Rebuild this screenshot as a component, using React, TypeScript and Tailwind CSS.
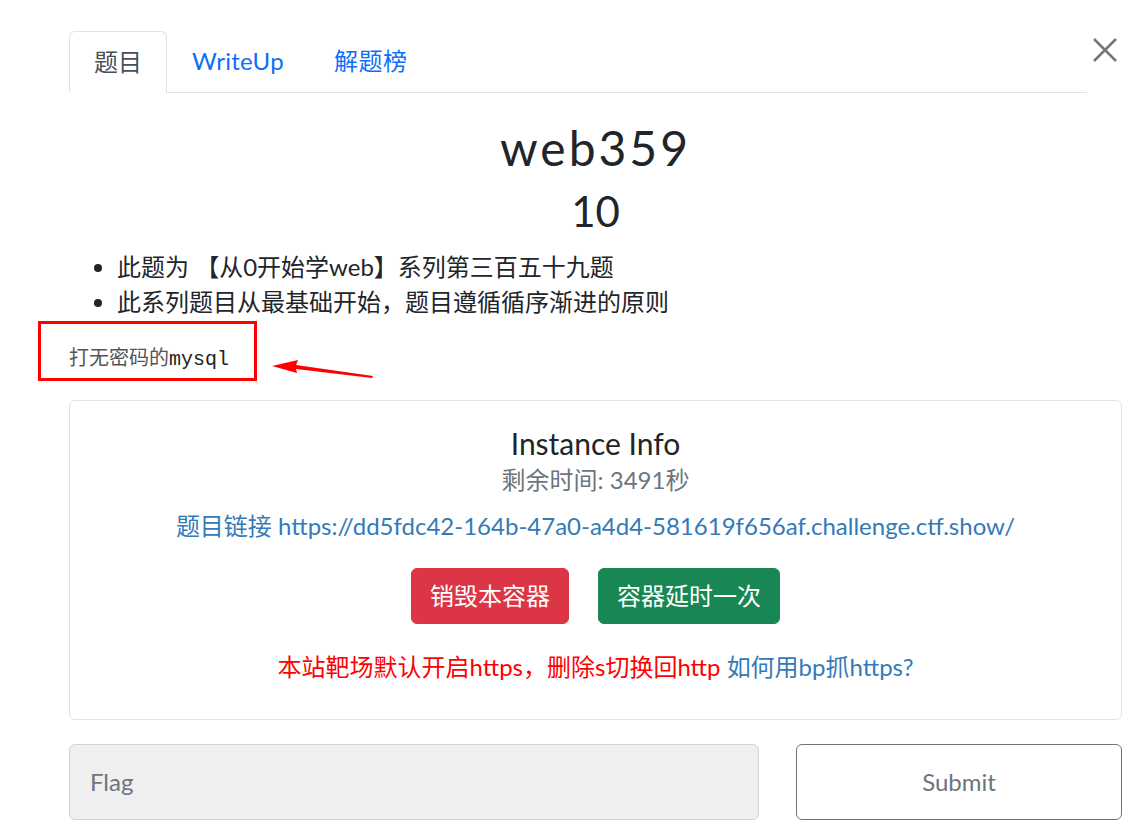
import React from "react";

export default function App() {
  const font = { fontFamily: 'Lato, "Noto Sans CJK SC", sans-serif' };
  return (
    <div className="relative min-h-[836px] w-[1139px] bg-white text-[24px] leading-[36px] text-[#212529]" style={font}>
      <div className="ml-[69px] w-[1053px] pt-[31px]">
        {/* tabs row */}
        <div className="flex items-start">
          <div className="flex flex-1 border-b border-[#dee2e6]">
            <div className="-mb-px rounded-t-[6px] border border-[#dee2e6] border-b-white bg-white px-[24px] py-[12px] text-[#495057]">题目</div>
            <div className="px-[25px] py-[12px] tracking-[0.3px] text-[#0d6efd]">WriteUp</div>
            <div className="px-[25px] py-[12px] tracking-[0.5px] text-[#0d6efd]">解题榜</div>
          </div>
          <div className="flex w-[35px] justify-center pt-[6px]">
            <svg width="26" height="26" viewBox="0 0 26 26">
              <path d="M2 2 L24 24 M24 2 L2 24" stroke="#777" strokeWidth="2.6" fill="none" />
            </svg>
          </div>
        </div>

        {/* title */}
        <h2 className="mt-[26px] text-center text-[48px] font-normal leading-[57px] tracking-[3px]">web359</h2>
        <h3 className="mb-[13px] mt-[10px] text-center text-[42px] font-normal leading-[50px]">10</h3>

        <ul className="mb-[29px] list-disc pl-[48px] leading-[35px]">
          <li>此题为 【从0开始学web】系列第三百五十九题</li>
          <li>此系列题目从最基础开始，题目遵循循序渐进的原则</li>
        </ul>

        <p className="relative text-[20px] leading-[24px] text-[#555]" style={{ fontFamily: '"Liberation Mono", "Noto Sans CJK SC", monospace' }}>
          打无密码的<span className="text-[#222]">mysql</span>
        </p>

        {/* card */}
        <div className="mt-[28px] rounded-[6px] border border-[#dfe2e6] px-[24px] pb-[34px] pt-[24px] text-center">
          <h5 className="text-[30px] font-normal leading-[36px]">Instance Info</h5>
          <div className="mt-[1px] text-[#6c757d]">剩余时间: 3491秒</div>
          <div className="mt-[10px] text-[#337ab7]">题目链接 https://dd5fdc42-164b-47a0-a4d4-581619f656af.challenge.ctf.show/</div>
          <div className="mt-[24px] flex justify-center gap-[29px]">
            <button className="rounded-[6px] border border-[#dc3545] bg-[#dc3545] px-[18px] py-[9px] leading-[36px] text-white">销毁本容器</button>
            <button className="rounded-[6px] border border-[#198754] bg-[#198754] px-[18px] py-[9px] leading-[36px] text-white">容器延时一次</button>
          </div>
          <div className="mt-[25px]">
            <span className="text-[#ff0000]">本站靶场默认开启https，删除s切换回http</span>{" "}
            <span className="text-[#337ab7]">如何用bp抓https?</span>
          </div>
        </div>

        {/* flag row */}
        <div className="mt-[24px] flex gap-[37px]">
          <div className="flex h-[76px] w-[690px] items-center rounded-[6px] border border-[#ced4da] bg-[#efefef] px-[20px] text-[#6c757d]">Flag</div>
          <button className="h-[76px] flex-1 rounded-[6px] border border-[#6c757d] bg-white text-[#6c757d]">Submit</button>
        </div>
      </div>

      {/* annotation overlay */}
      <div className="absolute left-[38px] top-[321px] h-[60px] w-[219px] border-[3px] border-[#ff0000]" />
      <svg className="absolute left-[268px] top-[355px]" width="110" height="26" viewBox="0 0 110 26">
        <path d="M4 11 L30 5 L28 10 L105 21 L104 23 L28 14 L29 18 Z" fill="#ff0000" />
      </svg>
    </div>
  );
}
